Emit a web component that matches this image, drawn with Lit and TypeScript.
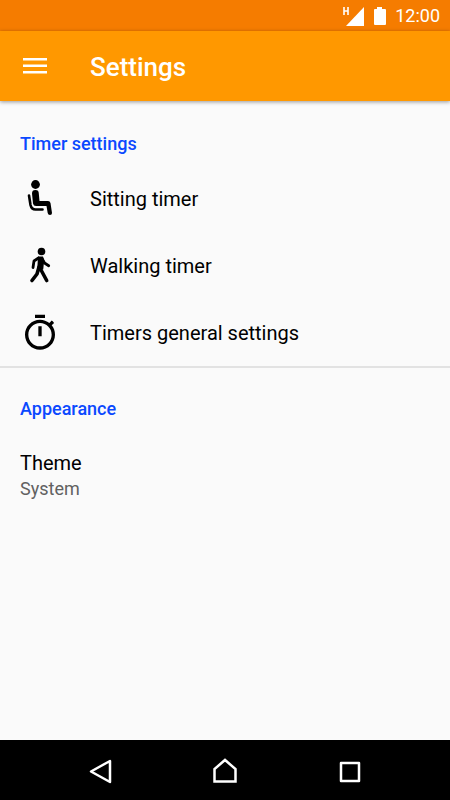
import { LitElement, html, css, svg } from "lit";
import { customElement } from "lit/decorators.js";

const sitting = svg`<circle cx="15.500" cy="5.500" r="4.400"/>
  <path d="M12 14.500a3.400 3.400 0 0 1 6.800 0l.700 7.500H28q2 0 2.500 2l1.500 10q0 2-2 2t-2.300-2L26.500 27H16q-2.500 0-3-2.500z"/>
  <path d="M9 16.500L10.500 26Q11.500 30.500 15.500 30.500H22.500" fill="none" stroke="#000" stroke-width="2.600" stroke-linecap="round"/>`;

const walking = svg`<circle cx="21.500" cy="5.500" r="3.800"/>
  <path d="M20.500 14L20.500 23L26.700 34.500M19 21L17 28L12 34.500" fill="none" stroke="#000" stroke-width="3.600" stroke-linecap="round" stroke-linejoin="round"/>
  <path d="M18.500 12L14 15L13 21.500M22 12.500L24.500 17L28.700 19.700" fill="none" stroke="#000" stroke-width="2.800" stroke-linecap="round" stroke-linejoin="round"/>
  <path d="M18 10.500h5l1.200 4-1 9h-6z"/>`;

const stopwatch = svg`<path transform="scale(1.6667)" d="M15 1H9v2h6V1zm-4 13h2V8h-2v6zm8.030-6.610l1.420-1.420c-.430-.510-.9-.990-1.410-1.410l-1.420 1.420C16.070 4.740 14.120 4 12 4c-4.970 0-9 4.030-9 9s4.020 9 9 9 9-4.030 9-9c0-2.120-.740-4.070-1.970-5.610zM12 20c-3.870 0-7-3.130-7-7s3.130-7 7-7 7 3.130 7 7-3.130 7-7 7z"/>`;

const timers = [
  { icon: sitting, label: "Sitting timer" },
  { icon: walking, label: "Walking timer" },
  { icon: stopwatch, label: "Timers general settings" },
];

@customElement("app-root")
export class AppRoot extends LitElement {
  static styles = css`
    :host {
      display: flex;
      flex-direction: column;
      min-height: 100vh;
      background: #fafafa;
      color: #000;
      font-family: Roboto, sans-serif;
    }
    svg { display: block; flex: none; }
    button {
      border: 0;
      padding: 0;
      background: none;
      color: inherit;
      font: inherit;
      text-align: left;
      cursor: pointer;
    }
    .status {
      display: flex;
      align-items: center;
      justify-content: flex-end;
      height: 31px;
      padding-right: 10px;
      background: #f57c00;
      color: #fff;
      font-size: 18px;
      line-height: 32px;
    }
    .battery { margin: 0 8px 0 9px; }
    .bar {
      display: flex;
      align-items: center;
      height: 70px;
      padding: 0 20px;
      background: #ff9800;
      color: #fff;
      box-shadow: 0 1px 4px rgba(0, 0, 0, 0.4);
    }
    .menu { width: 70px; }
    h1 {
      margin: 0;
      padding-top: 2px;
      font-size: 26px;
      font-weight: 500;
      line-height: 32px;
    }
    main { flex: 1; }
    section { padding-top: 32px; }
    section + section {
      padding-top: 30px;
      border-top: 2px solid #e2e2e2;
    }
    h2 {
      margin: 0;
      padding: 0 20px 10px;
      color: #0a48ff;
      font-size: 18px;
      font-weight: 500;
      line-height: 22px;
    }
    .row {
      display: flex;
      align-items: center;
      gap: 30px;
      width: 100%;
      height: 67px;
      padding: 0 20px;
      font-size: 20px;
      line-height: 26px;
    }
    .choice {
      display: block;
      width: 100%;
      padding: 20px;
      font-size: 20px;
      line-height: 26px;
    }
    .value {
      display: block;
      color: #616161;
      font-size: 18px;
    }
    .nav {
      display: flex;
      justify-content: center;
      gap: 85px;
      height: 60px;
      background: #000;
    }
    .nav button {
      display: grid;
      place-items: center;
      width: 40px;
    }
  `;

  render() {
    return html`
      <div class="status">
        <svg width="22" height="20" viewBox="0 0 22 20" fill="#fff">
          <path d="M22 1V20H4z"/>
          <path d="M2 1V9M6 1V9M2 5H6" fill="none" stroke="#fff" stroke-width="1.600"/>
        </svg>
        <svg class="battery" width="14" height="20" viewBox="0 0 14 20" fill="#fff">
          <path d="M4 1h5v2h3q1 0 1 1v14q0 1-1 1H2q-1 0-1-1V4q0-1 1-1h2z"/>
        </svg>
        <span>12:00</span>
      </div>
      <header class="bar">
        <button class="menu" aria-label="Open menu">
          <svg width="30" height="30" viewBox="0 0 30 30" fill="#fff">
            <path d="M3 7h24v2.500H3zM3 13.500h24V16H3zM3 20h24v2.500H3z"/>
          </svg>
        </button>
        <h1>Settings</h1>
      </header>
      <main>
        <section>
          <h2>Timer settings</h2>
          ${timers.map(
            (t) => html`<button class="row">
              <svg width="40" height="40" viewBox="0 0 40 40" aria-hidden="true">${t.icon}</svg>
              <span>${t.label}</span>
            </button>`
          )}
        </section>
        <section>
          <h2>Appearance</h2>
          <button class="choice">Theme<span class="value">System</span></button>
        </section>
      </main>
      <nav class="nav">
        <button aria-label="Back">
          <svg width="30" height="30" viewBox="0 0 30 30" fill="none" stroke="#fff" stroke-width="2.500" stroke-linejoin="round">
            <path d="M25 6V27L6 16.500z"/>
          </svg>
        </button>
        <button aria-label="Home">
          <svg width="30" height="30" viewBox="0 0 30 30" fill="none" stroke="#fff" stroke-width="2.500">
            <path d="M4.500 26.500V14L15 5L25.500 14V26.500z"/>
          </svg>
        </button>
        <button aria-label="Recent apps">
          <svg width="30" height="30" viewBox="0 0 30 30" fill="none" stroke="#fff" stroke-width="2.500" stroke-linejoin="round">
            <path d="M6 8H24V26H6z"/>
          </svg>
        </button>
      </nav>
    `;
  }
}
